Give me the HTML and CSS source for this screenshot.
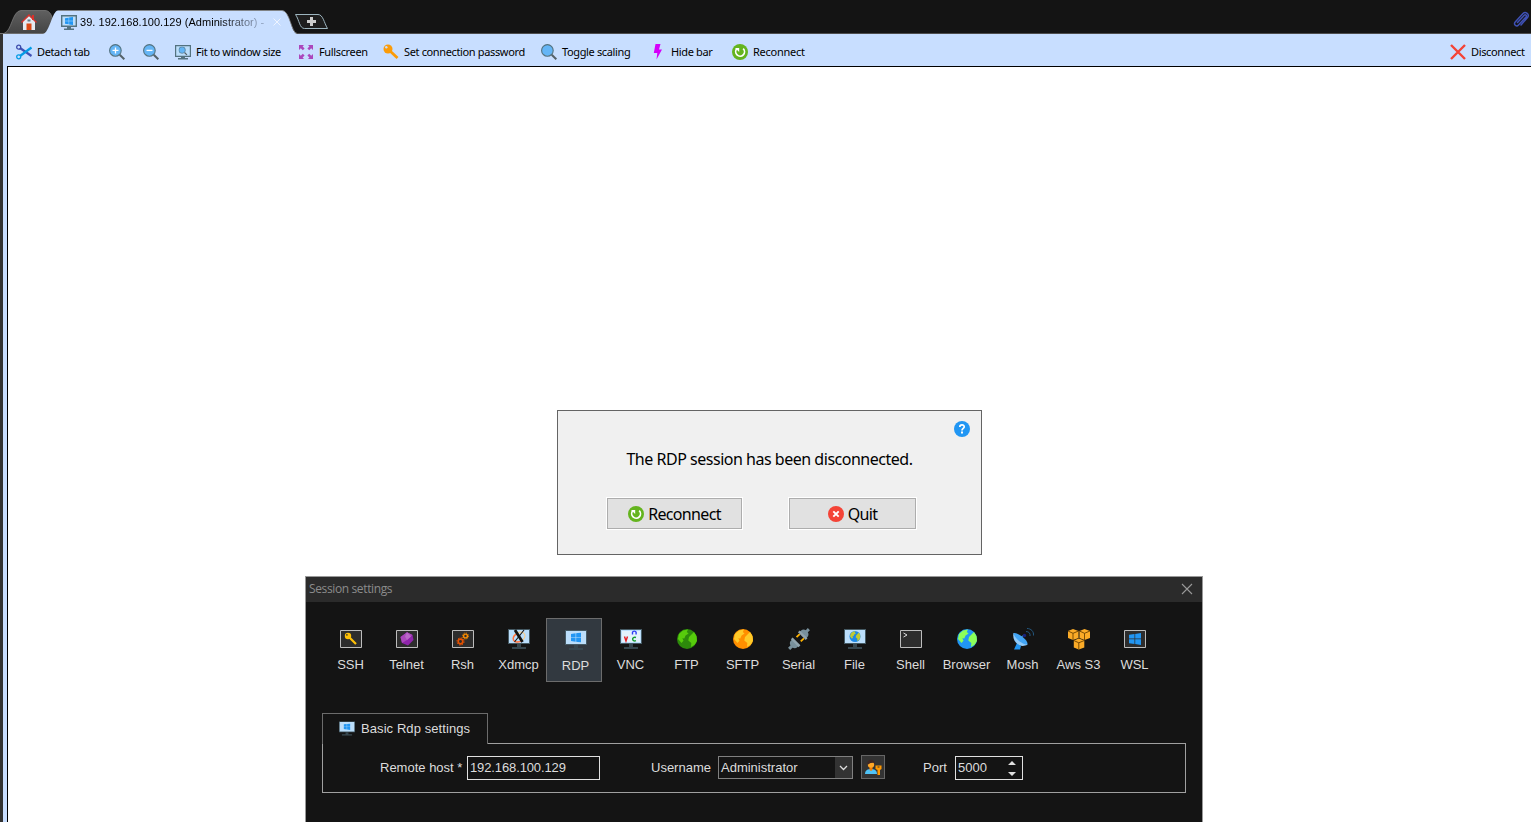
FILE: index.html
```html
<!DOCTYPE html>
<html lang="en">
<head>
<meta charset="utf-8">
<title>Session settings</title>
<link rel="stylesheet" href="styles.css">
</head>
<body>
<svg class="defs" width="0" height="0" aria-hidden="true">
  <defs>
    <symbol id="monitor" viewBox="0 0 22 20">
      <path d="M0 0h22v15H0z" fill="#455a64"/><path d="M1 1h20v13H1z" fill="#bbdefb"/>
      <path d="M9 15h4v3H9zM4 18h14v2H4z" fill="#37474f"/>
    </symbol>
    <symbol id="windows" viewBox="0 0 12 12">
      <path d="M0 1.7 5.5 1v4.6H0zM6.2.9 12 0v5.6H6.2zM0 6.3h5.5V11L0 10.3zM6.2 6.3H12V12l-5.8-.9z" fill="#2196f3"/>
    </symbol>
    <symbol id="box" viewBox="0 0 22 18"><path d="M.5.5h21v17H.5z" fill="#2d2d2d" stroke="#bcbcbc"/></symbol>
    <symbol id="reload" viewBox="0 0 16 16">
      <circle cx="8" cy="8" r="8" fill="#64b41e"/>
      <path d="M11.2 4.6a4.4 4.4 0 1 1-6.3.1" fill="none" stroke="#fff" stroke-width="1.7"/><path d="M3 4h4.2v4z" fill="#fff"/>
    </symbol>
    <symbol id="lens" viewBox="0 0 16 16">
      <path d="m10.7 10.7 4.6 4.6" stroke="#546168" stroke-width="2"/>
      <circle cx="6.4" cy="6.4" r="5.8" fill="#64b5f6" stroke="#54727f" stroke-width="1.1"/>
    </symbol>
    <symbol id="land" viewBox="0 0 20 20">
      <path d="M2 5 6 1.5 11 .6 9.8 3l1.8 1.4-3 2.1-1.3 3-2-.3 1.2 2.6L4.5 14 1 10zM12 8l3-3 2-2.1 2.6 4.3L20 12l-2.4 3.8L14 18l.3-4-3-2.5z"/>
    </symbol>
  </defs>
</svg>

<header class="tabbar">
  <svg class="tabshapes" width="340" height="34" viewBox="0 0 340 34">
    <defs><linearGradient id="hg" x1="0" x2="0" y1="0" y2="1"><stop offset="0" stop-color="#606060"/><stop offset="1" stop-color="#444"/></linearGradient></defs>
    <path d="M0 33.5h4C12 31 12 11 21 10.500h24c5 0 7 5 9 13l-4 10z" fill="url(#hg)" stroke="#777" stroke-width=".8"/>
    <path d="M43 34c7-2 9-23 15-23.500h224c8 0 9 22 15 23.500z" fill="#c8deff"/>
    <path d="M58 10.500h224c8 0 9 22 15 23" fill="none" stroke="#858585" stroke-width=".8"/>
    <path d="M300 14.500h18c5 0 6 8 9.500 14h-23c-5 0-5-8-9-14z" fill="#1e1e1e" stroke="#9db5bf"/>
    <path d="M307 21.500h9M311.500 17v9" stroke="#ccc" stroke-width="3"/>
  </svg>
  <div class="tab home">
    <svg width="16" height="16" viewBox="0 0 16 16"><path d="M2 7.500 8 2l6 5.500V16H2z" fill="#e6eaf0"/><path d="M11 1h2v5h-2z" fill="#d9312b"/><path d="M.5 8.500 8 1 15.500 8.500" fill="none" stroke="#d9312b" stroke-width="1.300"/><path d="M5.500 9.500h5V16h-5z" fill="#dd4814"/><path d="M6.500 5.500h3v2h-3z" fill="#607d8b"/></svg>
  </div>
  <div class="tab session">
    <svg width="16" height="15" viewBox="0 0 16 15"><path d="M.7.700h14.600v10.600H.7z" fill="#bbdefb" stroke="#54727f" stroke-width="1.400"/><path d="M6 12h4v1.500H6zM3 13.500h10V15H3z" fill="#54727f"/><use href="#windows" x="4" y="2" width="8" height="8"/></svg>
    <span class="tabtext">39. 192.168.100.129 (Administrator) -</span>
    <svg class="tabclose" width="8" height="8" viewBox="0 0 8 8"><path d="m.5.500 7 7m0-7-7 7" stroke="#eef4ff"/></svg>
  </div>
  <svg class="clip" width="18" height="18" viewBox="0 0 18 18"><path d="m5.500 11.500 6.500-7c1.500-1.500 3.200 0 2 1.500l-7.500 8c-2 2.300-5.500-.5-3.300-3L11 2.500c2.500-2.500 7 .8 4.700 3.700L9 14" fill="none" stroke="#3f51b5" stroke-width="1.500" stroke-linecap="round"/></svg>
</header>

<nav class="toolbar">
  <div class="tool t-detach"><svg width="16" height="16" viewBox="0 0 16 16"><path d="M4 4 15.500 12" stroke="#3f51b5" stroke-width="2.200"/><path d="M4 12 15.500 3.500" stroke="#039be5" stroke-width="2.200"/><circle cx="2.700" cy="3.200" r="2" fill="none" stroke="#3949ab" stroke-width="1.300"/><circle cx="2.700" cy="12.800" r="2" fill="none" stroke="#039be5" stroke-width="1.300"/></svg><span>Detach tab</span></div>
  <div class="tool t-zin"><svg width="16" height="16" viewBox="0 0 16 16"><use href="#lens"/><path d="M3.500 6.400h6M6.500 3.400v6" stroke="#fff" stroke-width="1.300"/></svg></div>
  <div class="tool t-zout"><svg width="16" height="16" viewBox="0 0 16 16"><use href="#lens"/><path d="M3.500 6.400h6" stroke="#fff" stroke-width="1.300"/></svg></div>
  <div class="tool t-fit"><svg width="16" height="16" viewBox="0 0 16 16"><path d="M.6 1.600h14.800v10.800H.6z" fill="#bbdefb" stroke="#54727f" stroke-width="1.200"/><path d="M6 12.500h4V14H6zM3 14h10v1.400H3z" fill="#54727f"/><use href="#lens" x="3.500" y="2.500" width="9" height="9"/></svg><span>Fit to window size</span></div>
  <div class="tool t-full"><svg width="16" height="16" viewBox="0 0 16 16"><g fill="#ab47bc"><path d="M1 1h5L4.600 2.400l2 2-1.800 1.800-2-2L1 6z" id="arr"/><use href="#arr" transform="matrix(-1 0 0 1 16 0)"/><use href="#arr" transform="matrix(1 0 0 -1 0 16)"/><use href="#arr" transform="matrix(-1 0 0 -1 16 16)"/></g></svg><span>Fullscreen</span></div>
  <div class="tool t-pass"><svg width="16" height="16" viewBox="0 0 16 16"><path d="m7 7 7.500 7" stroke="#fb9b08" stroke-width="2.800"/><circle cx="5" cy="5" r="4.500" fill="#fb9b08"/><circle cx="3.300" cy="3.300" r="1.200" fill="#c8deff"/></svg><span>Set connection password</span></div>
  <div class="tool t-scale"><svg width="16" height="16"><use href="#lens"/></svg><span>Toggle scaling</span></div>
  <div class="tool t-hide"><svg width="16" height="16" viewBox="0 0 16 16"><path d="M5.500 0h5L9 5.500h3L6.500 15.500l.8-6.500H3.800z" fill="#d500f9"/></svg><span>Hide bar</span></div>
  <div class="tool t-rec"><svg width="16" height="16"><use href="#reload"/></svg><span>Reconnect</span></div>
  <div class="tool t-dis"><svg width="16" height="16" viewBox="0 0 16 16"><path d="m1 1 14 14m0-14L1 15" stroke="#f44336" stroke-width="2.400"/></svg><span>Disconnect</span></div>
</nav>

<main class="screen">
  <section class="message">
    <svg class="help" width="16" height="16" viewBox="0 0 16 16"><circle cx="8" cy="8" r="8" fill="#2196f3"/><path d="M5.800 6C5.900 3.200 10.300 3.300 10.200 6 10.100 7.500 8 7.500 8 9.500" fill="none" stroke="#fff" stroke-width="1.700"/><path d="M7 10.600h2v1.900H7z" fill="#fff"/></svg>
    <p class="msgtext"><span>The RDP session has been disconnected.</span></p>
    <div class="buttons">
      <button class="btn b-rec"><svg width="16" height="16"><use href="#reload"/></svg><span>Reconnect</span></button>
      <button class="btn b-quit"><svg width="16" height="16" viewBox="0 0 16 16"><circle cx="8" cy="8" r="8" fill="#f44336"/><path d="m5.300 5.300 5.400 5.400m0-5.400-5.400 5.400" stroke="#fff" stroke-width="1.900"/></svg><span>Quit</span></button>
    </div>
  </section>

  <section class="settings">
    <div class="title"><span>Session settings</span><svg width="12" height="12" viewBox="0 0 12 12"><path d="m1 1 10 10m0-10L1 11" stroke="#999" stroke-width="1.100"/></svg></div>
    <div class="types">
      <div class="type"><svg width="22" height="22" viewBox="0 0 22 22"><use href="#box" y="2" width="22" height="18"/><path d="m9.500 9.500 6.500 6.500" stroke="#ffc107" stroke-width="2.200"/><circle cx="8" cy="8" r="3.200" fill="#ffc107"/><circle cx="6.900" cy="6.900" r=".8" fill="#2d2d2d"/></svg><span>SSH</span></div>
      <div class="type"><svg width="22" height="22" viewBox="0 0 22 22"><use href="#box" y="2" width="22" height="18"/><path d="m11 4.300 5.500 2.700 1 5L12 17.500 6 15l-1.500-6z" fill="#8e24aa"/><path d="m11 4.300-6.500 4.700L6 15l5-3 5.500-5z" fill="#ab47bc"/><path d="m11 4.300-2 4.200 2 3.500 4-3.500z" fill="#ba68c8"/></svg><span>Telnet</span></div>
      <div class="type"><svg width="22" height="22" viewBox="0 0 22 22"><use href="#box" y="2" width="22" height="18"/><g fill="none"><circle cx="8.500" cy="13.500" r="2.300" stroke="#e65100" stroke-width="1.700"/><circle cx="8.500" cy="13.500" r="3.600" stroke="#e65100" stroke-width="1" stroke-dasharray="1.400 1.400"/><circle cx="13.500" cy="8" r="1.900" stroke="#fb8c00" stroke-width="1.400"/><circle cx="13.500" cy="8" r="3" stroke="#fb8c00" stroke-width=".9" stroke-dasharray="1.200 1.160"/></g></svg><span>Rsh</span></div>
      <div class="type"><svg width="22" height="22" viewBox="0 0 22 22"><use href="#monitor" y="1" width="22" height="20"/><ellipse cx="11" cy="9" rx="6.300" ry="4.500" fill="none" stroke="#ffcc80" stroke-width="1" transform="rotate(-25 11 9)"/><path d="M10 5.500c-6 2-6.500 8.500-.5 8.500 2 0 3.500-.8 4.500-1.800" fill="none" stroke="#ff7043" stroke-width="1.400"/><path d="m7 2 7.500 12" stroke="#111" stroke-width="2.800"/><path d="M16 2 6.500 14" stroke="#111" stroke-width="1.100"/></svg><span>Xdmcp</span></div>
      <div class="type selected"><svg width="22" height="22" viewBox="0 0 22 22"><use href="#monitor" y="1" width="22" height="20"/><use href="#windows" x="6" y="3.500" width="10" height="10"/></svg><span>RDP</span></div>
      <div class="type"><svg width="22" height="22" viewBox="0 0 22 22"><use href="#monitor" y="1" width="22" height="20"/><path d="M2 3h18v11H2z" fill="#e3f2fd"/><path d="m4.500 8.500 1.500 4.500 1.500-4.500" fill="none" stroke="#e51c23" stroke-width="1.400"/><path d="M12.500 6.500V4.200c.4-1.400 3.200-1.400 3.600 0v2.300" fill="none" stroke="#303ff5" stroke-width="1.400"/><path d="M16 9.500c-4.500-1.500-4.500 4.700 0 3.200" fill="none" stroke="#159b30" stroke-width="1.400"/></svg><span>VNC</span></div>
      <div class="type"><svg width="22" height="22" viewBox="0 0 22 22"><circle cx="11" cy="11" r="10" fill="#2d8a0b"/><use href="#land" x="1" y="1" width="20" height="20" fill="#57cc0c"/></svg><span>FTP</span></div>
      <div class="type"><svg width="22" height="22" viewBox="0 0 22 22"><circle cx="11" cy="11" r="10" fill="#ff8f00"/><use href="#land" x="1" y="1" width="20" height="20" fill="#ffca28"/></svg><span>SFTP</span></div>
      <div class="type"><svg width="22" height="22" viewBox="0 0 22 22"><g transform="rotate(45 11 11)"><path d="M6.500 3.500c0-5 9-5 9 0v2h-9zM9.500-3h3v3h-3zM6.500 16h9v2c0 5-9 5-9 0zM9.500 21h3v4h-3z" fill="#78909c"/><path d="M5.500 4.500h11v2.500h-11zM5.500 14.500h11V17h-11z" fill="#90a4ae"/><path d="M8 7v4.500M14 7v4.500" stroke="#ffb300" stroke-width="1.800"/></g></svg><span>Serial</span></div>
      <div class="type"><svg width="22" height="22" viewBox="0 0 22 22"><use href="#monitor" y="1" width="22" height="20"/><circle cx="11" cy="8.500" r="5.500" fill="#1e88e5"/><use href="#land" x="5.500" y="3" width="11" height="11" fill="#c0ca33"/></svg><span>File</span></div>
      <div class="type"><svg width="22" height="22" viewBox="0 0 22 22"><use href="#box" y="2" width="22" height="18"/><path d="m3.500 5 3.500 2-3.500 2" fill="none" stroke="#ddd"/></svg><span>Shell</span></div>
      <div class="type"><svg width="22" height="22" viewBox="0 0 22 22"><circle cx="11" cy="11" r="10" fill="#2196f3"/><use href="#land" x="1" y="1" width="20" height="20" fill="#8cff59"/></svg><span>Browser</span></div>
      <div class="type"><svg width="22" height="22" viewBox="0 0 22 22"><path d="M2 21.500 5 15l4 3-1 3.500z" fill="#2196f3"/><path d="M1.500 5c-2 9 7 16 14 11.500z" fill="#90caf9"/><path d="M1.500 5c4-1 15 7 14 11.500C11 17 2 10 1.500 5z" fill="#42a5f5"/><path d="m8 10 4-3" stroke="#42a5f5"/><circle cx="12.500" cy="7.500" r="1.700" fill="#1a237e"/><path d="M14 3.500c3 0 4.500 2 4 4.500M15 .500c4 0 7 3 6.500 7" fill="none" stroke="#245880"/></svg><span>Mosh</span></div>
      <div class="type"><svg width="22" height="22" viewBox="0 0 22 22"><defs><g id="cube"><path d="M0 2 5 0l5.500 2v7L5 11 0 9z" fill="#fbab27"/><path d="m0 2 5 2.300L10.500 2M5 4.300V11" fill="none" stroke="#6d4300" stroke-width=".9"/></g></defs><use href="#cube" x="0" y="1"/><use href="#cube" x="11.500" y="1"/><use href="#cube" x="5.800" y="10.500"/></svg><span>Aws S3</span></div>
      <div class="type"><svg width="22" height="22" viewBox="0 0 22 22"><use href="#box" y="2" width="22" height="18"/><use href="#windows" x="5" y="5" width="12" height="12"/></svg><span>WSL</span></div>
    </div>
    <div class="group">
      <div class="grouptab"><svg width="16" height="15" viewBox="0 0 22 20"><use href="#monitor" width="22" height="20"/><use href="#windows" x="6" y="3" width="10" height="9"/></svg><span>Basic Rdp settings</span></div>
      <div class="panel">
        <label class="l-host">Remote host *</label>
        <div class="field f-host">192.168.100.129</div>
        <label class="l-user">Username</label>
        <div class="field f-user"><span>Administrator</span><div class="drop"><svg width="9" height="6" viewBox="0 0 9 6"><path d="m1 1 3.500 3.500L8 1" fill="none" stroke="#ddd" stroke-width="1.300"/></svg></div></div>
        <div class="cred"><svg width="17" height="16" viewBox="0 0 17 16"><path d="M0 15c0-4 3-5 6-5s6 1 6 5z" fill="#4fc3f7"/><path d="M4.500 8h3v3L6 12l-1.500-1z" fill="#f57c00"/><circle cx="6" cy="5.500" r="3.200" fill="#ffa726"/><path d="M2.300 6C1.500-.5 10-1.500 9.800 6L8.500 3.800 5.500 4z" fill="#3e2723"/><path d="M10.500 6.500h6V10l-1.500 1v5h-2.500v-5l-2-1z" fill="#ff9800"/><path d="M12.500 7.500h2v1h-2z" fill="#333"/></svg></div>
        <label class="l-port">Port</label>
        <div class="field f-port"><span>5000</span><svg width="8" height="15" viewBox="0 0 8 15"><path d="M0 4 4 0l4 4zM0 11h8l-4 4z" fill="#e0e0e0"/></svg></div>
      </div>
    </div>
  </section>
</main>
</body>
</html>
```
FILE: styles.css
```css
* { box-sizing: border-box; }
body { margin: 0; width: 1531px; height: 822px; overflow: hidden; background: #fff; font-family: "Liberation Sans", Arial, sans-serif; display: flex; flex-direction: column; }
svg { display: block; flex: none; overflow: visible; }
span, label { white-space: nowrap; }
.defs { position: absolute; }

.tabbar { position: relative; height: 34px; flex: none; background: #141414; border-bottom: 1px solid #4d4d4d; display: flex; }
.tabshapes { position: absolute; left: 0; top: 0; }
.tab { position: relative; display: flex; }
.home { width: 53px; padding: 14px 0 0 21px; }
.session { width: 245px; padding: 15px 0 0 8px; }
.tabtext { margin-left: 3px; width: 184px; font-size: 11px; line-height: 14px; letter-spacing: 0.04px; background: linear-gradient(90deg, #000 75%, #8fa0bd 97%); background-clip: text; -webkit-background-clip: text; color: transparent; }
.tabclose { margin: 3px 0 0 9px; }
.clip { margin: 11px 1px 0 auto; position: relative; }

.toolbar { height: 33px; flex: none; background: #c8deff; border-left: 3px solid #333; padding: 2px 0 0 13px; display: flex; position: relative; font: 11px "Noto Sans", sans-serif; color: #000; }
.tool { display: flex; align-items: center; gap: 5px; height: 32px; }
.t-detach { width: 93px; }
.t-zin { width: 34px; }
.t-zout { width: 32px; }
.t-fit { width: 123px; }
.t-full { width: 85px; }
.t-pass { width: 158px; }
.t-scale { width: 109px; }
.t-hide { width: 82px; }
.t-dis { margin-left: auto; width: 81px; }
.tool span { letter-spacing: -0.36px; padding-bottom: 2px; }
.tool.t-rec span { letter-spacing: -0.25px; }

.screen { position: relative; flex: 1; border-left: 1px solid #000; border-top: 1px solid #000; margin: -1px 0 0 7px; background: #fff; box-shadow: -4px 0 #c8deff, -7px 0 #333; }

.message { position: absolute; left: 549px; top: 343px; width: 425px; height: 145px; border: 1px solid #646464; background: #f0f0f0; font: 16px "Noto Sans", sans-serif; color: #000; }
.help { position: absolute; right: 11px; top: 10px; }
.msgtext { margin: 36px 0 0; height: 24px; line-height: 24px; text-align: center; letter-spacing: -0.48px; }
.buttons { display: flex; gap: 47px; padding: 27px 0 0 49px; }
.btn { height: 31px; border: 1px solid #adadad; box-shadow: 0 0 0 1px #fff; background: #e1e1e1; display: flex; align-items: center; justify-content: center; gap: 4px; padding: 0; font: inherit; letter-spacing: -0.65px; color: #000; }
.b-rec { width: 135px; }
.b-quit { width: 127px; }

.settings { position: absolute; left: 297px; top: 509px; width: 898px; height: 247px; border: 1px solid #999; border-bottom: 0; background: #141414; color: #dcdcdc; font-size: 13px; }
.title { height: 25px; background: #2b2b2b; display: flex; align-items: center; justify-content: space-between; padding: 0 9px 2px 3px; font: 12px "Open Sans", sans-serif; letter-spacing: -0.37px; color: #8c8c8c; }
.types { display: flex; padding: 16px 0 0 16px; }
.type { width: 56px; height: 64px; padding: 10px 0 0 1px; display: flex; flex-direction: column; align-items: center; }
.type svg { margin-left: 1px; }
.type span { margin-top: 7px; line-height: 15px; letter-spacing: 0; }
.selected { background: #323940; border: 1px solid #6c6c6c; padding: 10px 0 0 3px; }
.group { margin: 31px 16px 0; }
.grouptab { position: relative; z-index: 1; width: 166px; height: 31px; margin-bottom: -1px; border: 1px solid #6c6c6c; border-bottom: 0; background: #141414; display: flex; align-items: center; padding: 0 0 2px 16px; gap: 6px; letter-spacing: 0.08px; }
.panel { height: 50px; border: 1px solid #a0a0a0; display: flex; align-items: flex-start; padding-top: 12px; }
.panel label { line-height: 23px; letter-spacing: 0; }
.l-host { width: 87px; margin-left: 57px; }
.field { height: 24px; border: 1px solid #e0e0e0; line-height: 22px; padding-left: 2px; letter-spacing: 0; }
.f-host { width: 133px; letter-spacing: -0.12px; }
.l-user { margin-left: 51px; width: 67px; }
.f-user { width: 135px; height: 23px; border-color: #808080; display: flex; justify-content: space-between; }
.drop { width: 17px; background: #333; display: flex; align-items: center; justify-content: center; }
.cred { width: 24px; height: 24px; margin: -1px 0 0 8px; border: 1px solid #666; background: #333; display: flex; align-items: center; justify-content: center; }
.l-port { margin-left: 38px; width: 32px; }
.f-port { width: 68px; display: flex; justify-content: space-between; align-items: center; padding-right: 6px; }
```
